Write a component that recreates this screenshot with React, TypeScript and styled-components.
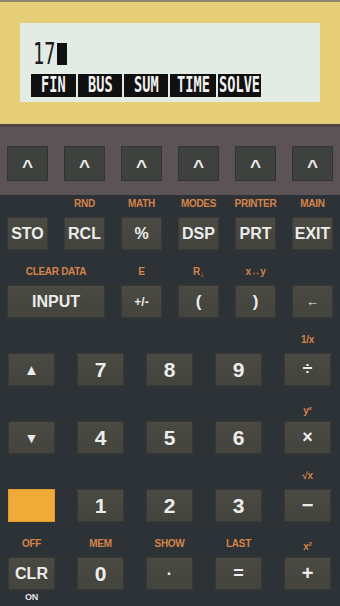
import React from "react";
import styled, { createGlobalStyle } from "styled-components";

const GlobalStyle = createGlobalStyle`
  html, body { margin: 0; padding: 0; background: #2d3236; }
  body { width: 340px; height: 606px; overflow: hidden; font-family: "Liberation Sans", Arial, sans-serif; }
`;

const Screen = styled.div`
  width: 340px;
  height: 606px;
  display: flex;
  flex-direction: column;
  background: #2d3236;
`;

const TopStrip = styled.div`
  height: 2px;
  background: #8d8470;
`;

const DisplayArea = styled.div`
  height: 122px;
  background: #e6ce78;
  padding: 21px 20px 0 20px;
  box-sizing: border-box;
`;

const Lcd = styled.div`
  width: 300px;
  height: 79px;
  background: #e2ebe4;
  box-sizing: border-box;
  padding: 19px 0 0 11px;
  display: flex;
  flex-direction: column;
`;

const Readout = styled.div`
  display: flex;
  align-items: center;
  height: 23px;
  padding-left: 2px;
`;

const DigitsBox = styled.div`
  width: 24px;
  height: 23px;
  overflow: visible;
  display: flex;
  align-items: center;
`;

const Digits = styled.span`
  display: inline-block;
  font-family: "DejaVu Sans Mono", monospace;
  font-size: 31px;
  line-height: 23px;
  color: #1c1c1c;
  transform: scaleX(0.6);
  transform-origin: left center;
  white-space: nowrap;
`;

const Cursor = styled.div`
  width: 10px;
  height: 22px;
  background: #111;
`;

const MenuRow = styled.div`
  display: flex;
  gap: 2px;
  margin-top: 9px;
`;

const MenuBox = styled.div<{ $w: number }>`
  width: ${(p) => p.$w}px;
  height: 23px;
  background: #101010;
  display: flex;
  align-items: center;
  justify-content: center;
  overflow: hidden;
`;

const MenuText = styled.span`
  display: inline-block;
  font-family: "DejaVu Sans Mono", monospace;
  font-weight: bold;
  font-size: 17px;
  line-height: 17px;
  color: #f2f2f2;
  transform: scale(0.8, 1.2);
  white-space: nowrap;
`;

const Divider = styled.div`
  height: 3px;
  background: #4a4446;
`;

const FnPanel = styled.div`
  height: 68px;
  background: #5c5356;
  box-sizing: border-box;
  padding: 19px 7px 0 7px;
  display: grid;
  grid-template-columns: repeat(6, 41px);
  column-gap: 16px;
  align-items: start;
`;

const FnKey = styled.div`
  height: 35px;
  background: #3e413d;
  border: 1px solid #333532;
  box-sizing: border-box;
  display: flex;
  align-items: center;
  justify-content: center;
  color: #e8e8e8;
  font-family: "Liberation Sans", Arial, sans-serif;
  font-weight: bold;
  font-size: 19px;
  padding-top: 6px;
`;

const Body = styled.div`
  padding-top: 1px;
  display: flex;
  flex-direction: column;
`;

const Row = styled.div<{ $cols: number }>`
  height: 68px;
  display: grid;
  grid-template-columns: ${(p) => (p.$cols === 6 ? "repeat(6, 41px)" : "repeat(5, 47px)")};
  column-gap: ${(p) => (p.$cols === 6 ? "16px" : "22px")};
  padding-left: ${(p) => (p.$cols === 6 ? "7px" : "8px")};
`;

const Cell = styled.div<{ $span?: number }>`
  grid-column: span ${(p) => p.$span ?? 1};
  display: flex;
  flex-direction: column;
  align-items: stretch;
`;

const Label = styled.div`
  height: 16px;
  line-height: 16px;
  text-align: center;
  font-family: "Liberation Sans", Arial, sans-serif;
  font-weight: bold;
  font-size: 10px;
  letter-spacing: -0.3px;
  color: #d4834a;
  white-space: nowrap;
  margin: 0 -10px;
`;

const SubLabel = styled(Label)`
  color: #e4e4e4;
  height: 14px;
  line-height: 14px;
  font-size: 9px;
`;

const Key = styled.div<{ $size?: number; $accent?: boolean }>`
  margin-top: 5px;
  height: 33px;
  box-sizing: border-box;
  background: ${(p) => (p.$accent ? "#f0aa38" : "linear-gradient(#4a4a43, #43443d)")};
  border: 1px solid ${(p) => (p.$accent ? "#e39a2c" : "#393a35")};
  display: flex;
  align-items: center;
  justify-content: center;
  color: #ececec;
  font-family: "Liberation Sans", Arial, sans-serif;
  font-weight: bold;
  font-size: ${(p) => p.$size ?? 16}px;
`;

const Sup = styled.sup`
  font-size: 6px;
`;

const Sub = styled.span`
  font-size: 9px;
  vertical-align: -2px;
`;

type K = { top?: React.ReactNode; label?: React.ReactNode; size?: number; span?: number; accent?: boolean; bottom?: string };

const rows: { cols: number; keys: K[] }[] = [
  {
    cols: 6,
    keys: [
      { label: "STO" },
      { top: "RND", label: "RCL" },
      { top: "MATH", label: "%" },
      { top: "MODES", label: "DSP" },
      { top: "PRINTER", label: "PRT" },
      { top: "MAIN", label: "EXIT" },
    ],
  },
  {
    cols: 6,
    keys: [
      { top: "CLEAR DATA", label: "INPUT", span: 2 },
      { top: "E", label: "+/-", size: 12 },
      { top: <>R<Sub>↓</Sub></>, label: "(", size: 17 },
      { top: "x↔y", label: ")", size: 17 },
      { label: "←", size: 13 },
    ],
  },
  {
    cols: 5,
    keys: [
      { label: "▲", size: 15 },
      { label: "7", size: 21 },
      { label: "8", size: 21 },
      { label: "9", size: 21 },
      { top: "1/x", label: "÷", size: 18 },
    ],
  },
  {
    cols: 5,
    keys: [
      { label: "▼", size: 14 },
      { label: "4", size: 21 },
      { label: "5", size: 21 },
      { label: "6", size: 21 },
      { top: <>y<Sup>x</Sup></>, label: "×", size: 18 },
    ],
  },
  {
    cols: 5,
    keys: [
      { label: "", accent: true },
      { label: "1", size: 21 },
      { label: "2", size: 21 },
      { label: "3", size: 21 },
      { top: "√x", label: "−", size: 20 },
    ],
  },
  {
    cols: 5,
    keys: [
      { top: "OFF", label: "CLR", bottom: "ON" },
      { top: "MEM", label: "0", size: 21 },
      { top: "SHOW", label: "·", size: 16 },
      { top: "LAST", label: "=", size: 18 },
      { top: <>x<Sup>2</Sup></>, label: "+", size: 20 },
    ],
  },
];

const menus: [string, number][] = [
  ["FIN", 45],
  ["BUS", 44],
  ["SUM", 44],
  ["TIME", 46],
  ["SOLVE", 43],
];

export default function App() {
  return (
    <>
      <GlobalStyle />
      <Screen>
        <TopStrip />
        <DisplayArea>
          <Lcd>
            <Readout>
              <DigitsBox>
                <Digits>17</Digits>
              </DigitsBox>
              <Cursor />
            </Readout>
            <MenuRow>
              {menus.map(([m, w]) => (
                <MenuBox key={m} $w={w}>
                  <MenuText>{m}</MenuText>
                </MenuBox>
              ))}
            </MenuRow>
          </Lcd>
        </DisplayArea>
        <Divider />
        <FnPanel>
          {Array.from({ length: 6 }).map((_, i) => (
            <FnKey key={i}>^</FnKey>
          ))}
        </FnPanel>
        <Body>
          {rows.map((r, ri) => (
            <Row key={ri} $cols={r.cols}>
              {r.keys.map((k, ki) => (
                <Cell key={ki} $span={k.span}>
                  <Label>{k.top ?? ""}</Label>
                  <Key $size={k.size} $accent={k.accent}>
                    {k.label}
                  </Key>
                  {k.bottom && <SubLabel>{k.bottom}</SubLabel>}
                </Cell>
              ))}
            </Row>
          ))}
        </Body>
      </Screen>
    </>
  );
}
